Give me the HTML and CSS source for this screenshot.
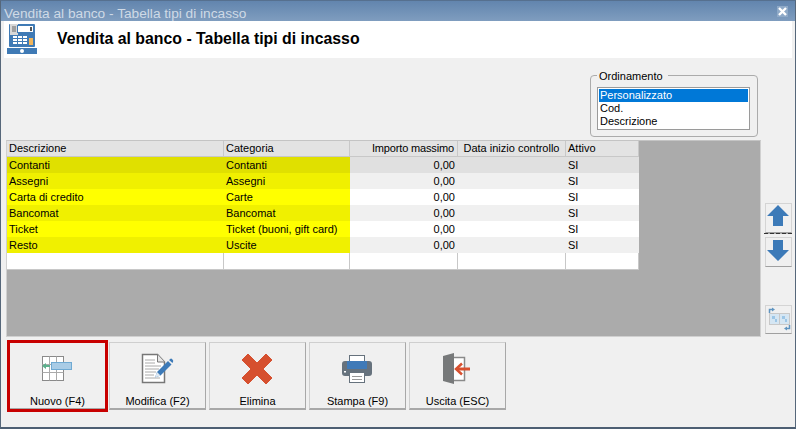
FILE: index.html
```html
<!DOCTYPE html>
<html lang="it">
<head>
<meta charset="utf-8">
<title>Vendita al banco - Tabella tipi di incasso</title>
<link rel="stylesheet" href="styles.css">
</head>
<body>
<div class="window">
  <div class="titlebar">
    <span class="title">Vendita al banco - Tabella tipi di incasso</span>
    <span class="close"><svg width="9" height="9" viewBox="0 0 9 9"><path d="M1 1l7 7M8 1L1 8" stroke="#fff" stroke-width="2.4"/></svg></span>
  </div>
  <div class="content">
    <header class="header">
      <svg class="logo" width="30" height="30" viewBox="0 0 30 30">
        <rect x="2" y="0" width="26" height="23" rx="1" fill="#3f7ab5"/>
        <rect x="3" y="0" width="8" height="11" fill="#d8d8d8"/>
        <rect x="5" y="2" width="4" height="6" fill="#a0a0a0"/>
        <rect x="10" y="1" width="17" height="8" fill="#3f7ab5"/>
        <rect x="11" y="2" width="15" height="6" fill="#fff"/>
        <rect x="23" y="3" width="2" height="4" fill="#555"/>
        <g fill="#fff">
          <rect x="6" y="12" width="4" height="2"/><rect x="11" y="12" width="4" height="2"/><rect x="16" y="12" width="4" height="2"/>
          <rect x="6" y="15" width="4" height="2"/><rect x="11" y="15" width="4" height="2"/><rect x="16" y="15" width="4" height="2"/>
          <rect x="6" y="18" width="4" height="2"/><rect x="11" y="18" width="4" height="2"/><rect x="16" y="18" width="4" height="2"/>
        </g>
        <rect x="22" y="14" width="4" height="7" fill="#f0b45a"/>
        <rect x="0" y="24" width="30" height="6" fill="#3f7ab5"/>
        <circle cx="15" cy="27" r="2" fill="#fff"/>
      </svg>
      <h1 class="heading">Vendita al banco - Tabella tipi di incasso</h1>
    </header>
    <div class="sort-row">
      <fieldset class="sort">
        <legend class="sort-legend">Ordinamento</legend>
        <ul class="listbox">
          <li class="list-item selected">Personalizzato</li>
          <li class="list-item">Cod.</li>
          <li class="list-item">Descrizione</li>
        </ul>
      </fieldset>
    </div>
    <div class="middle">
      <div class="grid-area">
        <table class="grid">
          <colgroup><col class="c1"><col class="c2"><col class="c3"><col class="c4"><col class="c5"></colgroup>
          <thead>
            <tr><th>Descrizione</th><th>Categoria</th><th class="num">Importo massimo</th><th class="mid">Data inizio controllo</th><th>Attivo</th></tr>
          </thead>
          <tbody>
            <tr class="row-cur"><td class="y">Contanti</td><td class="y">Contanti</td><td class="num">0,00</td><td></td><td>SI</td></tr>
            <tr class="row-alt"><td class="y">Assegni</td><td class="y">Assegni</td><td class="num">0,00</td><td></td><td>SI</td></tr>
            <tr><td class="y">Carta di credito</td><td class="y">Carte</td><td class="num">0,00</td><td></td><td>SI</td></tr>
            <tr class="row-alt"><td class="y">Bancomat</td><td class="y">Bancomat</td><td class="num">0,00</td><td></td><td>SI</td></tr>
            <tr><td class="y">Ticket</td><td class="y">Ticket (buoni, gift card)</td><td class="num">0,00</td><td></td><td>SI</td></tr>
            <tr class="row-alt"><td class="y">Resto</td><td class="y">Uscite</td><td class="num">0,00</td><td></td><td>SI</td></tr>
            <tr class="row-blank"><td></td><td></td><td></td><td></td><td></td></tr>
          </tbody>
        </table>
      </div>
      <div class="side">
        <button class="side-btn up" type="button" aria-label="Su"><svg width="22" height="22" viewBox="0 0 22 22"><path d="M11 0L22 11H16V21H6V11H0z" fill="#3c7ab8"/></svg></button>
        <div class="side-sep"></div>
        <button class="side-btn down" type="button" aria-label="Giù"><svg width="22" height="22" viewBox="0 0 22 22"><path d="M6 0H16V10H22L11 21L0 10H6z" fill="#3c7ab8"/></svg></button>
        <button class="side-btn swap" type="button" aria-label="Scambia"><svg width="24" height="24" viewBox="0 0 24 24">
          <rect x="2.500" y="6.500" width="10" height="11" fill="#d5e6f3" stroke="#c8c8c8"/><rect x="12.500" y="6.500" width="10" height="11" fill="#d5e6f3" stroke="#c8c8c8"/>
          <rect x="5" y="9" width="3" height="3" fill="#9cc6e6"/><rect x="15" y="9" width="3" height="3" fill="#9cc6e6"/>
          <rect x="8" y="12" width="2" height="3" fill="#9cc6e6"/><rect x="18" y="12" width="2" height="3" fill="#9cc6e6"/>
          <path d="M2.500 6V2.500H5" fill="none" stroke="#5f94c0" stroke-width="1.500"/><path d="M5 .5L8 2.500L5 4.500z" fill="#5f94c0"/>
          <path d="M22.500 18V21.500H20" fill="none" stroke="#5f94c0" stroke-width="1.500"/><path d="M20 19.500L17 21.500L20 23.500z" fill="#5f94c0"/>
        </svg></button>
      </div>
    </div>
    <footer class="toolbar">
      <button class="tool active" type="button">
        <svg class="tool-icon" width="33" height="33" viewBox="0 0 33 33">
          <rect x="1.500" y="4.500" width="21" height="24" fill="#fff" stroke="#8a8a8a"/>
          <path d="M8.500 4.500v24M15.500 4.500v24M1.500 12.500h21M1.500 20.500h21" stroke="#aaa" fill="none"/>
          <rect x="10.500" y="10.500" width="20" height="7" fill="#a9cce6" stroke="#6faad3"/>
          <path d="M1 14L5 11V13H9V15H5V17z" fill="#5cb08c"/>
        </svg>
        <span>Nuovo (F4)</span>
      </button>
      <button class="tool" type="button">
        <svg class="tool-icon" width="33" height="33" viewBox="0 0 33 33">
          <path d="M1.500 2.500H16.500L23.500 10V30.500H1.500z" fill="#fff" stroke="#777" stroke-width="1.500"/>
          <path d="M16.500 2.500V10H23.500" fill="#e8e8e8" stroke="#777"/>
          <path d="M4 8h10M4 11h10M4 14h16M4 17h14M4 20h11M4 23h9M4 26h15" stroke="#aaa"/>
          <path d="M14 25.500L16 20L27 9L30.500 12.500L19.500 23.500z" fill="#3c7ab8"/>
          <path d="M28 8L29.500 6.800Q30.300 6.300 31 7L32 8.200Q32.500 9 32 9.800L31.500 11z" fill="#3c7ab8"/>
          <path d="M14 25.500L16 20L19.500 23.500z" fill="#dfe9f2"/>
        </svg>
        <span>Modifica (F2)</span>
      </button>
      <button class="tool" type="button">
        <svg class="tool-icon" width="33" height="33" viewBox="0 0 33 33">
          <path d="M7 2L16 11L25 2L31 8L22 17L31 26L25 32L16 23L7 32L1 26L10 17L1 8z" fill="#d6502f" stroke="#d6502f" stroke-linejoin="round"/>
        </svg>
        <span>Elimina</span>
      </button>
      <button class="tool" type="button">
        <svg class="tool-icon" width="33" height="33" viewBox="0 0 33 33">
          <rect x="8.500" y="3.500" width="15" height="7" fill="#fff" stroke="#66727d"/>
          <path d="M4 9H28Q31 9 31 12V21Q31 24 28 24H4Q1 24 1 21V12Q1 9 4 9z" fill="#66727d"/>
          <rect x="6" y="9" width="20" height="8" fill="#3f7ab8"/>
          <rect x="8.500" y="20.500" width="15" height="10" fill="#fff" stroke="#66727d"/>
          <path d="M11 24.500h10M11 27.500h10" stroke="#999"/>
          <rect x="3" y="19" width="2" height="1.500" fill="#fff"/>
        </svg>
        <span>Stampa (F9)</span>
      </button>
      <button class="tool" type="button">
        <svg class="tool-icon" width="33" height="33" viewBox="0 0 33 33">
          <path d="M13 5.500H23.500V28.500H13" fill="#fff" stroke="#8a8a8a" stroke-width="1.500"/>
          <path d="M2 4L13 1V32L2 29z" fill="#77797a"/>
          <path d="M29 17H16" stroke="#d8502f" stroke-width="3"/>
          <path d="M21 11.500L15 17L21 22.500" fill="none" stroke="#d8502f" stroke-width="2.500"/>
        </svg>
        <span>Uscita (ESC)</span>
      </button>
    </footer>
  </div>
</div>
</body>
</html>
```
FILE: styles.css
```css
* { box-sizing: border-box; }
html, body { margin: 0; padding: 0; }
body {
  width: 796px;
  height: 429px;
  overflow: hidden;
  font-family: "Liberation Sans", Arial, sans-serif;
  font-size: 11px;
  color: #000;
  background: #f0f0f0;
}
.window {
  width: 796px;
  height: 429px;
  display: flex;
  flex-direction: column;
  background: #f0f0f0;
  border: 1px solid #56677a;
  border-top-color: #56708f;
  border-bottom: 2px solid #4d5f73;
}
.titlebar {
  height: 20px;
  flex: none;
  display: flex;
  align-items: center;
  justify-content: space-between;
  padding: 1px 7px 0 3px;
  background: linear-gradient(#6285ae, #7f9dbf);
}
.title { color: #cfdae6; font-size: 13.7px; padding-top: 3px; }
.close {
  width: 11px;
  height: 11px;
  display: flex;
  align-items: center;
  justify-content: center;
  background: #8ea9c7;
}
.content {
  flex: 1;
  margin: 0 3px;
  background: #f0f0f0;
  display: flex;
  flex-direction: column;
  min-height: 0;
}
.header {
  height: 37px;
  flex: none;
  display: flex;
  align-items: center;
  background: #fff;
  padding: 0 0 2px 3px;
}
.logo { flex: none; align-self: flex-start; margin-top: 3px; }
.heading {
  margin: 0 0 0 20px;
  font-size: 15.85px;
  font-weight: bold;
}
.sort-row {
  display: flex;
  justify-content: flex-end;
  padding: 10px 34px 3px 0;
  flex: none;
}
.sort {
  width: 168px;
  height: 69px;
  margin: 0;
  padding: 0 7px 0 6px;
  border: 1px solid #ababab;
  border-radius: 4px;
}
.sort-legend { padding: 2px 5px 0 2px; margin-left: 0; line-height: 13px; }
.listbox {
  list-style: none;
  margin: 4px 0 0;
  padding: 1px;
  height: 43px;
  background: #fff;
  border: 1px solid #9a9a9a;
}
.list-item { height: 13px; line-height: 13px; padding-left: 1px; }
.selected { background: #0078d7; color: #fff; }
.middle { display: flex; flex: none; height: 197px; padding-left: 2px; }
.grid-area {
  width: 755px;
  height: 197px;
  flex: none;
  background: #ababab;
  border: 1px solid #d0d0d0;
  border-top-color: #c4c4c4;
}
.grid {
  border-collapse: separate;
  border-spacing: 0;
  table-layout: fixed;
  width: 632px;
  background: #fff;
}
.c1 { width: 217px; }
.c2 { width: 126px; }
.c3 { width: 108px; }
.c4 { width: 108px; }
.c5 { width: 73px; }
.grid th, .grid td {
  height: 16px;
  padding: 0 2px;
  font-weight: normal;
  text-align: left;
  white-space: nowrap;
  line-height: 15px;
}
.grid th {
  background: #e3e3e3;
  border-right: 1px solid #c8c8c8;
  border-bottom: 1px solid #c8c8c8;
}
.grid .mid { text-align: center; }
.grid .row-blank td { height: 17px; border-right: 1px solid #c8c8c8; border-bottom: 1px solid #c8c8c8; }
.grid .num { text-align: right; padding-right: 3px; }
.grid th.num { letter-spacing: -0.15px; }
.row-cur td { background: #e0e0e0; }
.row-alt td { background: #f0f0f0; }
.grid .y { background: #ffff00; }
.row-alt .y { background: #f0f000; }
.row-cur .y { background: #e0e000; }
.side {
  flex: 1;
  display: flex;
  flex-direction: column;
  align-items: flex-start;
  padding: 63px 0 0 4px;
}
.side-btn {
  width: 27px;
  height: 30px;
  flex: none;
  margin: 0;
  padding: 0 0 0 1px;
  display: flex;
  align-items: flex-start;
  justify-content: flex-start;
  background: #f0f0f0;
  border: 1px solid #d4d4d4;
  border-bottom: 1px solid #a0a0a0;
}
.up { padding-top: 1px; }
.down { padding-top: 2px; }
.side-sep {
  width: 28px;
  height: 1px;
  margin: 0 0 3px -1px;
  background: repeating-linear-gradient(90deg, #333 0 4px, #aaa 4px 6px);
}
.swap { margin-top: 38px; height: 29px; padding: 1px 0 0 1px; }
.toolbar {
  display: flex;
  flex: none;
  gap: 3px;
  padding: 5px 0 0 5px;
}
.tool {
  width: 97px;
  height: 68px;
  margin: 0;
  padding: 0 0 1px;
  display: flex;
  flex-direction: column;
  align-items: center;
  justify-content: space-between;
  font: inherit;
  color: #000;
  background: #f0f0f0;
  border: 1px solid #cfcfcf;
  border-right-color: #a8a8a8;
  border-bottom: 2px solid #a8a8a8;
}
.tool-icon { margin-top: 9px; flex: none; }
.active { outline: 3px solid #c80000; outline-offset: -1px; }
```
